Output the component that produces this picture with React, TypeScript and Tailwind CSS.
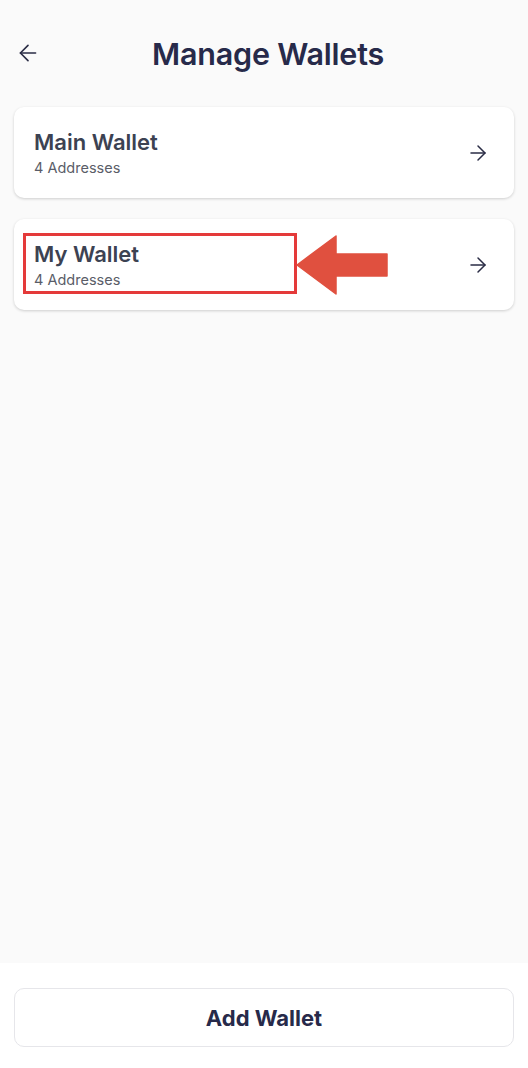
import { ArrowLeft, ArrowRight } from 'lucide-react';

const wallets = [
  { name: 'Main Wallet', count: 4 },
  { name: 'My Wallet', count: 4, marked: true },
];

const WalletCard = ({ name, count, marked }: { name: string; count: number; marked?: boolean }) => {
  return (
    <div className="relative flex items-center justify-between bg-white rounded-[10px] shadow-[0_1px_3px_rgba(0,0,0,0.18)] h-[91px] pl-5 pr-6">
      <div className="flex flex-col gap-[2px]">
        <span className="text-[22px] leading-7 font-semibold text-[#3c4252]">{name}</span>
        <span className="text-[14.5px] leading-5 font-normal text-[#5a5d68]">{count} Addresses</span>
      </div>
      <ArrowRight className="w-6 h-6 text-[#2a2c45]" strokeWidth={1.5} />

      {/* annotation overlay */}
      {marked && (
        <>
          <div className="absolute left-[9px] top-[14px] w-[274px] h-[61px] border-[3px] border-[#e43a3a]" />
          <svg className="absolute left-[282px] top-[16px]" width="92" height="60" viewBox="0 0 92 60">
            <path d="M1 30 L40 1 L40 19 L91 19 L91 41 L40 41 L40 59 Z" fill="#e0503f" strokeLinejoin="round" stroke="#e0503f" strokeWidth="1.5" />
          </svg>
        </>
      )}
    </div>
  );
};

export default function App() {
  return (
    <div className="w-[528px] h-[1068px] bg-[#fafafa] flex flex-col" style={{ fontFamily: 'Inter, "Noto Sans", sans-serif' }}>
      {/* Header */}
      <div className="relative flex items-center justify-center h-[104px] pt-1">
        <ArrowLeft className="absolute left-[15px] top-[40px] w-[26px] h-[26px] text-[#2a2c45]" strokeWidth={1.5} />
        <h1 className="text-[30.5px] font-semibold text-[#272a4a] tracking-[-0.2px] ml-2">Manage Wallets</h1>
      </div>

      {/* Wallet list */}
      <div className="flex flex-col gap-[21px] px-[14px] pt-[3px]">
        {wallets.map((w) => (
          <WalletCard key={w.name} {...w} />
        ))}
      </div>

      <div className="flex-1" />

      {/* Footer */}
      <div className="bg-white h-[105px] px-[14px] pt-[25px]">
        <button className="w-full h-[59px] rounded-[10px] border border-[#e6e6ea] bg-white text-[22px] font-bold text-[#272a4a] pt-[2px]">
          Add Wallet
        </button>
      </div>
    </div>
  );
}
